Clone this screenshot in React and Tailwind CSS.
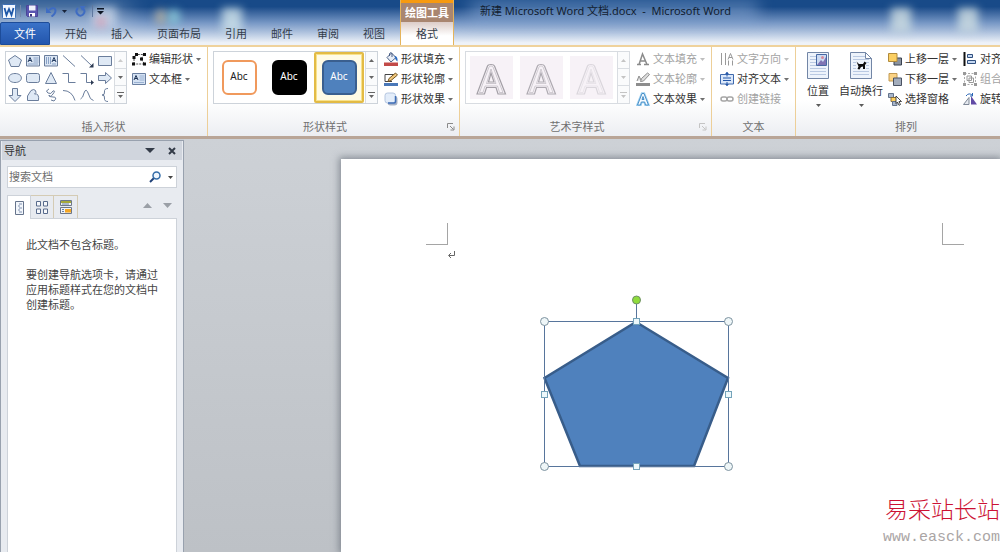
import React, { useState } from "react";

const TABS = ["开始", "插入", "页面布局", "引用", "邮件", "审阅", "视图"];

const LINE = "#6a7d9b";
const FILL = "#dfe9f5";

const SHAPES = [
  { name: "五边形", d: "M7 1.500 13.500 6 11 12.500H3L.5 6Z", fill: true },
  { name: "文本框", box: "left" },
  { name: "竖排文本框", box: "right" },
  { name: "直线", d: "M1 1.500 13 12.500" },
  { name: "箭头", d: "M1 1.500 12 12", head: "M13.500 13.500H9L13.500 9Z" },
  { name: "矩形", d: "M.5 2.500H13.500V11.500H.5Z", fill: true },
  { name: "椭圆", d: "M7 2.500C15.500 2.500 15.500 11.500 7 11.500S-1.500 2.500 7 2.500Z", fill: true },
  { name: "圆角矩形", d: "M2.500 2.500H11.500Q13.500 2.500 13.500 4.500V9.500Q13.500 11.500 11.500 11.500H2.500Q.5 11.500 .5 9.500V4.500Q.5 2.500 2.500 2.500Z", fill: true },
  { name: "三角形", d: "M7 1.500 12.500 12.500H1.500Z", fill: true },
  { name: "肘形连接符", d: "M.5 2.500H6.500V11.500H13.500" },
  { name: "肘形箭头", d: "M.5 2.500H6.500V11.500H12", head: "M11 9 14 11.500 11 14Z" },
  { name: "右箭头", d: "M.5 4.500H7.500V1.500L13.500 7 7.500 12.500V9.500H.5Z", fill: true },
  { name: "下箭头", d: "M4.500 .5H9.500V7.500H13L7 13.500 1 7.500H4.500Z", fill: true },
  { name: "任意多边形", d: "M1.500 12.500V8L5 2.500Q8 .5 9.500 2.500T8.500 6Q13.500 5 12.500 12.500Z", fill: true },
  { name: "自由曲线", d: "M5 1Q1 3 4 5T9 3Q12 2 9 6T5 7Q4 9 9 9T10 13L7 12" },
  { name: "弧形", d: "M1 2.500Q10 2.500 13 12.500" },
  { name: "曲线", d: "M.5 11Q3 10 4 5Q6-1 8.500 6Q10 12 13.500 12.500" },
  { name: "左大括号", d: "M10 .5Q6 .5 6.500 4Q7 7 4 7Q7 7 6.500 10Q6 13.500 10 13.500" },
];

function ShapeIcon({ shape }) {
  if (shape.box) {
    const left = shape.box === "left";
    return (
      <svg width="14" height="14" viewBox="0 0 14 14" fill="none">
        <path d="M.5 1.500h13v10.500H.5z" fill="#dbe6f4" stroke={LINE} />
        <path
          d={left ? "M2 8 4 3.500 6 8M3 6.500h2" : "M8 8 10 3.500 12 8M9 6.500h2"}
          stroke="#22395e"
        />
        <path
          d={left ? "M7.500 4h5M7.500 6h5M7.500 8h5M2 10h10" : "M2.500 3v7M4.500 3v7M6.500 3v7M8 10h4"}
          stroke="#8aa2c6"
        />
      </svg>
    );
  }
  return (
    <svg width="14" height="14" viewBox="0 0 14 14">
      <path d={shape.d} fill={shape.fill ? FILL : "none"} stroke={LINE} />
      {shape.head && <path d={shape.head} fill="#2c3a52" />}
    </svg>
  );
}

function Arrow({ className = "" }) {
  return (
    <svg className={`shrink-0 ${className}`} width="5" height="3" viewBox="0 0 5 3">
      <path d="M0 0h5L2.500 3z" fill="currentColor" />
    </svg>
  );
}

const ICONS = {
  editShape: (
    <>
      <path d="M2 12V5l2-2.500h8L9 7l3.500 5Z" fill="none" stroke="#555" strokeDasharray="2 1" />
      <path d="M0 10.500h3v3H0zM.5 4h3v3h-3zM3 1h3v3H3zM11 1h3v3h-3zM8 5.500h3v3H8zM11 10.500h3v3h-3z" fill="#111" />
    </>
  ),
  textBox: (
    <>
      <path d="M.5 1.500h13v11H.5z" fill="#d5e2f3" stroke="#6a7fa0" />
      <path d="M2 8 4 3.500 6 8M3 6.500h2" fill="none" stroke="#1c3254" />
      <path d="M7.500 4h5M7.500 6h5M7.500 8h5M2 10.500h10" stroke="#9ab1d1" />
    </>
  ),
  fill: (
    <>
      <path d="M3 5.500 7.500 1l4.500 4.500-5 4.500Z" fill="#e8eef7" stroke="#4a5f85" />
      <path d="M5.500 4V1.500q1.500-2 2.500 0V5" fill="none" stroke="#4a5f85" />
      <path d="M10.500 4q3.500 0 3 5.500-2-1-2.500-3.500Z" fill="#2d6cc0" />
      <path d="M0 10.500h14V14H0z" fill="#c24a48" />
    </>
  ),
  outline: (
    <>
      <path d="M1 2.500h10M1 2.500v7h7" fill="none" stroke="#444" />
      <path d="M4 9.500 5 6.500 11.500 1 13.500 3 7 8.500Z" fill="#f0c77c" stroke="#735320" />
      <path d="M0 11h14v3H0z" fill="#4a78b8" />
    </>
  ),
  effect: (
    <>
      <rect x="3.500" y="4" width="10" height="9.500" rx="3" fill="#a5b1c6" />
      <rect x="1" y="1" width="10.500" height="10" rx="2.500" fill="#e3edfa" stroke="#b5c6e0" />
      <path d="M11.500 4v5.500q0 1.500-1.500 1.500H4" fill="none" stroke="#3f6fb8" strokeWidth="1.500" />
    </>
  ),
  textFill: (
    <path d="M1 12.500h4M8 12.500h5M3 12.500 6.500 2 11 12.500M4.500 9h5" fill="none" stroke="#8b8b8b" strokeWidth="1.500" />
  ),
  textOutline: (
    <>
      <path d="M1 9 3 4l2 4M4.500 9.500l1-3L11.500 1l2 1.500-6 6.500Z" fill="#ddd" stroke="#8d8d8d" />
      <path d="M0 11h14v3H0z" fill="#8d8d8d" />
    </>
  ),
  textEffect: (
    <>
      <path d="M1.500 13 6 1.500h2L12.500 13H9.500L8.700 10H5.300L4.500 13ZM6 7.500h2l-1-3Z" fill="#eaf6ff" stroke="#9fd2f2" strokeWidth="2.500" />
      <path d="M1.500 13 6 1.500h2L12.500 13H9.500L8.700 10H5.300L4.500 13ZM6 7.500h2l-1-3Z" fill="#f4faff" stroke="#4a90c8" />
    </>
  ),
  direction: (
    <>
      <path d="M1.500 1v12M5.500 1v12" stroke="#999" />
      <path d="M8 7.500 10.500 1.500 13 7.500M9 5.500h3M8.500 8.500v5M12.500 8.500v5" fill="none" stroke="#999" />
    </>
  ),
  alignText: (
    <>
      <path d="M.5 2.500h13v9.500H.5z" fill="#dbe8fa" stroke="#3f69ad" />
      <path d="M3 6h8M3 8.500h8M7 0v4.500M7 14V10" stroke="#2356a8" />
      <path d="M5 2 7 0l2 2M5 12l2 2 2-2" fill="#2356a8" />
    </>
  ),
  link: (
    <>
      <rect x="1" y="5" width="6" height="4" rx="2" fill="none" stroke="#a5a5a5" strokeWidth="1.500" />
      <rect x="7" y="5" width="6" height="4" rx="2" fill="none" stroke="#a5a5a5" strokeWidth="1.500" />
    </>
  ),
  forward: (
    <>
      <path d="M6 6h7.500v7H6z" fill="#8a93a0" stroke="#39414f" />
      <path d="M.5 1.500h8.500v8H.5z" fill="#fbcf62" stroke="#b08a3c" />
    </>
  ),
  backward: (
    <>
      <path d="M1 1.500h8v7.500H1z" fill="#fbd384" stroke="#c29a52" />
      <path d="M5.500 6h8v7.500h-8z" fill="#a3adbc" stroke="#4a5262" />
    </>
  ),
  selectPane: (
    <>
      <path d="M.5 1.500h5v4h-5z" fill="#a9b6ca" stroke="#64748c" />
      <path d="M3 5.500h5.500v4H3z" fill="#ffd15c" stroke="#8c713a" />
      <path d="M4.500 9.500H9v4H4.500z" fill="#a9b6ca" stroke="#64748c" />
      <path d="m8 4 5.500 5.500h-2.500l1.500 3-1.500.800L9.500 10 8 11.500Z" fill="#fff" stroke="#222" strokeWidth=".8" />
    </>
  ),
  align: (
    <>
      <path d="M1.500 0v14" stroke="#111" strokeWidth="2" />
      <path d="M4.500 2.500h5v3h-5zM4.500 8.500h8v3h-8z" fill="#c5d8f2" stroke="#2f4f7e" />
    </>
  ),
  group: (
    <>
      <path d="M1.500 1.500h11v11h-11z" fill="none" stroke="#aaa" strokeDasharray="2 1.500" />
      <path d="M4 4h4.500v4.500H4zM6 6h4.500v4.500H6z" fill="none" stroke="#999" />
      <path d="M0 0h3v3H0zM11 0h3v3h-3zM0 11h3v3H0zM11 11h3v3h-3z" fill="#999" />
    </>
  ),
  rotate: (
    <>
      <path d="M.5 12.500H6V5.500Z" fill="#e5e9ef" stroke="#7d8796" />
      <path d="M8 12.500h6L8 4Z" fill="#614aa5" />
      <path d="M3 4q3-4 6.500-.5M9.500 1v3H7" fill="none" stroke="#2864b4" />
    </>
  ),
};

function Command({ icon, label, arrow = true, disabled = false }) {
  return (
    <button
      type="button"
      disabled={disabled}
      className={`flex h-5 items-center gap-[3px] whitespace-nowrap ${
        disabled ? "text-[#a3a3a3]" : "text-[#333]"
      }`}
    >
      <svg className="shrink-0" width="14" height="14" viewBox="0 0 14 14">
        {ICONS[icon]}
      </svg>
      <span>{label}</span>
      {arrow && <Arrow className="opacity-70" />}
    </button>
  );
}

function Group({ title, launcher, dim, className = "", children }) {
  return (
    <section
      aria-label={title}
      className="flex shrink-0 flex-col justify-between border-r border-[#edcf98] pt-[2px]"
    >
      <div className={`flex items-start pr-[6px] ${className}`}>{children}</div>
      <div className="flex h-[18px] items-center text-[#707070]">
        <h3 className="flex-1 text-center">{title}</h3>
        {launcher && (
          <button type="button" aria-label={`${title}对话框`} className={`mr-[4px] ml-[5px] ${dim ? "text-[#c4c4c4]" : "text-[#8a8a8a]"}`}>
            <svg width="8" height="8" viewBox="0 0 8 8" fill="none" stroke="currentColor">
              <path d="M.5 5V.5H6M3 3l3.500 3.500M7 3.500V7H3.500" />
            </svg>
          </button>
        )}
      </div>
    </section>
  );
}

function GalleryScroll({ dimUp, dim }) {
  const tone = dim ? "text-[#c4c4c4]" : "text-[#666]";
  return (
    <div className="grid w-3 grid-rows-3 divide-y divide-[#d9dde2] border-l border-[#d9dde2] bg-[#fafbfc]">
      <button type="button" aria-label="上一行" className={`grid place-items-center ${dimUp ? "text-[#ccc]" : tone}`}>
        <Arrow className="rotate-180" />
      </button>
      <button type="button" aria-label="下一行" className={`grid place-items-center ${tone}`}>
        <Arrow />
      </button>
      <button type="button" aria-label="其他" className={`grid place-items-center ${tone}`}>
        <svg width="7" height="6" viewBox="0 0 7 6">
          <path d="M0 0h7v1H0zM1 3h5L3.500 6z" fill="currentColor" />
        </svg>
      </button>
    </div>
  );
}

const STYLES = [
  "border-2 border-[#f0995c] bg-white text-[#222]",
  "border-2 border-black bg-black text-white",
  "border-2 border-[#3a5f8f] bg-[#4f81bd] text-white",
];

const WORD_ART = ["#a39fa6", "#aeaab1", "#dad6dc"];

function WordArt({ color }) {
  return (
    <svg width="43" height="43" viewBox="0 0 43 43" fill="none" stroke={color}>
      <path
        d="M7 38 17.500 10Q18 8.500 21 8.500T24.500 10L35.500 38H28L26 31.500H16.500L14.500 38ZM18.500 26H24L21 17Z"
        strokeWidth="1.200"
      />
      <path
        d="M9.500 36.500 19 11Q19.500 10 21 10T23 11L33 36.500H29.500L27.500 30H15L13 36.500ZM16.500 27.500H26L21 13Z"
        strokeWidth=".5"
      />
    </svg>
  );
}

function PageIcon({ wrap }) {
  return (
    <svg width="22" height="27" viewBox="0 0 22 27">
      <path d={wrap ? "M.5.5H15.500L21.500 6.500V26.500H.5Z" : "M.5.5H21.500V26.500H.5Z"} fill="#edf3fb" stroke="#7286a6" />
      <path d="M3 4.500h16M3 7.500h16M3 10.500h16M3 13.500h16M3 16.500h16M3 19.500h16M3 22.500h16" stroke="#b9c9e2" />
      {wrap ? (
        <>
          <path d="M15.500.5V6.500H21.500Z" fill="#fff" stroke="#7286a6" />
          <path d="M6 8h10v11H6z" fill="#edf3fb" />
          <path d="M6.500 9.500 9 12h4l1.500-2.500 2 1.500-1.500 2v4h-2v-2.500l-2 .5-1.500 2.500-2-.5 1-2.500Z" fill="#0c0c0c" />
        </>
      ) : (
        <>
          <path d="M9.500 2.500h10v11h-10z" fill="#cbdaf2" stroke="#4667a2" />
          <path d="m10 13 4-5 2 2 3-5v8Z" fill="#7f74b4" />
          <circle cx="15.500" cy="5.500" r="1.500" fill="#d78a9a" />
        </>
      )}
    </svg>
  );
}

function BigCommand({ wrap, label }) {
  return (
    <button type="button" className="flex flex-col items-center px-[2px] pt-[3px] text-[#333]">
      <PageIcon wrap={wrap} />
      <span className="mt-[3px] h-[18px] leading-[18px] whitespace-nowrap">{label}</span>
      <Arrow className="mt-[4px] opacity-80" />
    </button>
  );
}

function Header() {
  return (
    <header className="relative flex overflow-hidden border-b-2 border-[#efd29c] bg-linear-to-b from-[#184a88] from-15% via-[#7596c4] via-50% to-[#eef2f8] to-95%">
      {/* desktop icons showing through the glass frame */}
      <div aria-hidden="true" className="pointer-events-none absolute inset-0">
        <div className="absolute top-[6px] -left-4 h-5 w-36 bg-white/45 blur-md" />
        <div className="absolute top-[7px] left-[92px] h-[20px] w-6 bg-[#cfdcec]/70 blur-xs" />
        <div className="absolute top-[18px] left-[97px] h-2 w-2 bg-[#e58aa0]/80 blur-xs" />
        <div className="absolute top-[9px] left-[155px] h-4 w-3 rounded-full bg-[#b9b4a2]/80 blur-xs" />
        <div className="absolute top-[9px] left-[168px] h-4 w-3 rounded-full bg-[#8fd0dc]/80 blur-xs" />
        <div className="absolute top-[8px] left-[222px] h-6 w-5 bg-[#cfe3ea]/80 blur-xs" />
        <div className="absolute top-[8px] left-[891px] h-6 w-5 bg-[#cfdfe2]/80 blur-xs" />
        <div className="absolute top-[8px] left-[958px] h-6 w-5 bg-[#cfdfe2]/80 blur-xs" />
        <div className="absolute top-[2px] left-[470px] h-4 w-72 bg-[#a9c4e8]/45 blur-sm" />
      </div>

      <div className="relative shrink-0">
        <div className="flex h-[22px] items-center pl-[2px]">
          <svg width="14" height="15" viewBox="0 0 14 15">
            <rect x=".5" y=".5" width="13" height="14" rx="1" fill="#f2f7ff" stroke="#3c6fb5" />
            <path d="M2.500 4 4.500 11 7 5 9.500 11 11.500 4" fill="none" stroke="#1d57a8" strokeWidth="1.800" />
          </svg>
          <span className="mr-[5px] ml-[4px] h-3 w-px bg-[#7389ac]" />
          <button type="button" aria-label="保存">
            <svg width="12" height="12" viewBox="0 0 12 12">
              <path d="M.5.5h11v11H1.500l-1-1Z" fill="#5a55b0" stroke="#4a4698" />
              <path d="M3 .5h6.500v5H3z" fill="#eef1fb" />
              <path d="M3 8h6v3.500H3z" fill="#fff" />
              <path d="M4 9h2v2.500H4z" fill="#38347f" />
            </svg>
          </button>
          <button type="button" aria-label="撤消" className="ml-2 flex items-center gap-[5px] text-[#18233a]">
            <svg width="11" height="11" viewBox="0 0 11 11">
              <path d="M3 4Q9 0 9.500 4.500 9.500 8 5.500 10.500" fill="none" stroke="#3f6cc2" strokeWidth="2" />
              <path d="M0 1v6h5.500Z" fill="#3f6cc2" />
            </svg>
            <Arrow />
          </button>
          <button type="button" aria-label="重复" className="ml-[8px]">
            <svg width="11" height="11" viewBox="0 0 11 11">
              <path d="M3 2Q0 5 2.500 8T8 8.500Q11 5.500 8 2.500" fill="none" stroke="#3f6cc2" strokeWidth="2" />
              <path d="M5 0h5.500L7 5Z" fill="#3f6cc2" />
            </svg>
          </button>
          <span className="mr-[4px] ml-[6px] h-3 w-px bg-[#5f789f]" />
          <button type="button" aria-label="自定义快速访问工具栏" className="text-[#0d1524]">
            <svg width="7" height="7" viewBox="0 0 7 7">
              <path d="M0 0h7v1.500H0zM0 3h7L3.500 6.500z" fill="currentColor" />
            </svg>
          </button>
        </div>
        <nav className="flex h-[23px]">
          <button
            type="button"
            className="mr-[3px] w-[50px] rounded-t-xs border border-[#1d4c99] bg-linear-to-b from-[#3a72c8] to-[#2356ad] text-white"
          >
            文件
          </button>
          {TABS.map((tab) => (
            <button key={tab} type="button" className="px-3 text-[#333c4a]">
              {tab}
            </button>
          ))}
        </nav>
      </div>

      <div className="relative ml-[3px] flex w-[54px] shrink-0 flex-col border-x border-[#e5b45c]">
        <div className="flex h-[22px] items-center justify-center border-t-[3px] border-[#f79a10] bg-[#a98670] font-bold text-white">
          绘图工具
        </div>
        <button
          type="button"
          className="flex-1 bg-linear-to-b from-[#dccdc8] to-white to-60% text-[#333c4a]"
        >
          格式
        </button>
      </div>

      <h1 className="relative flex h-[21px] min-w-0 flex-1 items-center truncate pl-[26px] text-[#121d30]">
        新建 Microsoft Word 文档.docx&nbsp; -&nbsp; Microsoft Word
      </h1>
    </header>
  );
}

function Ribbon() {
  const [style, setStyle] = useState(2);

  return (
    <div className="flex h-[92px] overflow-hidden border-b-[3px] border-[#b9a597] bg-linear-to-b from-white from-60% to-[#eceef2]">
      <Group title="插入形状" className="pl-[5px]">
        <div className="mt-[2px] mr-[5px] flex h-[53px] border border-[#cdd3da]">
          <div className="grid grid-cols-6">
            {SHAPES.map((shape) => (
              <button key={shape.name} type="button" aria-label={shape.name} className="grid w-[18px] place-items-center">
                <ShapeIcon shape={shape} />
              </button>
            ))}
          </div>
          <GalleryScroll dimUp />
        </div>
        <div>
          <Command icon="editShape" label="编辑形状" />
          <Command icon="textBox" label="文本框" />
        </div>
      </Group>

      <Group title="形状样式" launcher className="pl-[5px]">
        <div className="mt-[2px] mr-[6px] flex h-[53px] border border-[#cdd3da] bg-white">
          <div className="flex w-[151px]">
            {STYLES.map((tone, i) => (
              <button
                key={tone}
                type="button"
                onClick={() => setStyle(i)}
                className={`grid w-[50px] place-items-center rounded-xs ${
                  style === i ? "border-2 border-[#e3bb45] bg-[#fffbe6] ring-1 ring-[#f8e28c] ring-inset" : ""
                }`}
              >
                <span className={`grid size-[35px] place-items-center rounded-md pb-1 text-[10px] ${tone}`}>Abc</span>
              </button>
            ))}
          </div>
          <GalleryScroll />
        </div>
        <div>
          <Command icon="fill" label="形状填充" />
          <Command icon="outline" label="形状轮廓" />
          <Command icon="effect" label="形状效果" />
        </div>
      </Group>

      <Group title="艺术字样式" launcher dim className="pl-[5px]">
        <div className="mt-[2px] mr-[6px] flex h-[53px] border border-[#d8dce1] bg-white">
          <div className="flex w-[151px] items-center gap-[7px] pl-[4px]">
            {WORD_ART.map((color, i) => (
              <button key={color} type="button" disabled aria-label={`艺术字 ${i + 1}`} className="bg-[#f7f2f7]">
                <WordArt color={color} />
              </button>
            ))}
          </div>
          <GalleryScroll dim />
        </div>
        <div>
          <Command icon="textFill" label="文本填充" disabled />
          <Command icon="textOutline" label="文本轮廓" disabled />
          <Command icon="textEffect" label="文本效果" />
        </div>
      </Group>

      <Group title="文本" className="pl-[8px]">
        <div>
          <Command icon="direction" label="文字方向" disabled />
          <Command icon="alignText" label="对齐文本" />
          <Command icon="link" label="创建链接" arrow={false} disabled />
        </div>
      </Group>

      <Group title="排列" className="pl-[9px]">
        <BigCommand label="位置" />
        <div className="mr-[3px] ml-[6px]">
          <BigCommand wrap label="自动换行" />
        </div>
        <div className="mr-[6px]">
          <Command icon="forward" label="上移一层" />
          <Command icon="backward" label="下移一层" />
          <Command icon="selectPane" label="选择窗格" arrow={false} />
        </div>
        <div>
          <Command icon="align" label="对齐" />
          <Command icon="group" label="组合" disabled />
          <Command icon="rotate" label="旋转" />
        </div>
      </Group>
    </div>
  );
}

function Navigation() {
  const [query, setQuery] = useState("");

  return (
    <aside className="mt-px flex w-[184px] shrink-0 flex-col border-t border-r border-l border-[#98a1ae] bg-[#e8ebf0]">
      <div className="mx-px flex h-[19px] items-center bg-[#d0d5dd] pr-[6px] pl-[2px] text-[#333]">
        <h2 className="flex-1">导航</h2>
        <button type="button" aria-label="任务窗格选项">
          <svg width="10" height="5" viewBox="0 0 10 5">
            <path d="M0 0h10L5 5z" fill="#333b48" />
          </svg>
        </button>
        <button type="button" aria-label="关闭" className="ml-[13px]">
          <svg width="8" height="8" viewBox="0 0 8 8">
            <path d="m1 1 6 6M7 1 1 7" stroke="#333b48" strokeWidth="2" />
          </svg>
        </button>
      </div>

      <form
        className="mx-[6px] mt-[6px] flex h-[22px] items-center border border-[#cdd2d9] bg-white pr-[3px]"
        onSubmit={(e) => e.preventDefault()}
      >
        <input
          type="text"
          aria-label="搜索文档"
          placeholder="搜索文档"
          value={query}
          onChange={(e) => setQuery(e.target.value)}
          className="min-w-0 flex-1 pl-[1px] placeholder:text-[#6d6d6d] focus:outline-none"
        />
        <button type="submit" aria-label="搜索">
          <svg width="12" height="12" viewBox="0 0 12 12" fill="none">
            <path d="M1 11 5 7" stroke="#1f4078" strokeWidth="2" />
            <circle cx="7.500" cy="4.500" r="3.500" fill="#eef5fc" stroke="#336ca8" strokeWidth="1.500" />
          </svg>
        </button>
        <button type="button" aria-label="搜索选项" className="ml-[7px] text-[#444]">
          <Arrow />
        </button>
      </form>

      <div className="mx-[6px] mt-[7px] flex items-center">
        <button
          type="button"
          aria-label="浏览标题"
          className="z-10 -mb-px grid h-6 w-6 place-items-center border border-b-0 border-[#cdd2d9] bg-white"
        >
          <svg width="9" height="14" viewBox="0 0 9 14" fill="none">
            <path d="M.5.5h8v13h-8z" fill="#f2f6fb" stroke="#66748c" />
            <path d="M4 3h3M3 5h2M4 7h3M3 9h2M4 11h3" stroke="#7e8fae" />
          </svg>
        </button>
        <button type="button" aria-label="浏览页面" className="grid h-[23px] w-[23px] place-items-center border-t border-r border-[#d4cbb4]">
          <svg width="12" height="13" viewBox="0 0 12 13" fill="none" stroke="#586b8c">
            <path d="M.5.5h4v4.500h-4zM7.500.5h4v4.500h-4zM.5 8h4v4.500h-4zM7.500 8h4v4.500h-4z" fill="#f7f9fc" />
          </svg>
        </button>
        <button type="button" aria-label="浏览搜索结果" className="grid h-[23px] w-[24px] place-items-center border-t border-r border-[#d4cbb4]">
          <svg width="12" height="14" viewBox="0 0 12 14" fill="none">
            <path d="M.5.500h11v5H.5zM.5 7.500h11v6H.5z" fill="#eef2f7" stroke="#6d7788" />
            <path d="M1 1h10v2H1z" fill="#a6a93a" />
            <path d="M5 9h6v3.500H5z" fill="#f5a623" />
            <path d="M2 4h7M2 9.500h2M2 11.500h2" stroke="#6a7fa6" />
          </svg>
        </button>
        <div className="mb-[3px] ml-auto flex gap-[11px] pr-[5px] text-[#9a9fa6]">
          <button type="button" aria-label="上一标题">
            <svg width="9" height="5" viewBox="0 0 9 5">
              <path d="M0 5h9L4.500 0z" fill="currentColor" />
            </svg>
          </button>
          <button type="button" aria-label="下一标题">
            <svg width="9" height="5" viewBox="0 0 9 5">
              <path d="M0 0h9L4.500 5z" fill="currentColor" />
            </svg>
          </button>
        </div>
      </div>

      <div className="mx-[6px] flex-1 border-x border-t border-[#cdd2d9] bg-white px-[18px] pt-[18px] leading-[15px] text-[#444]">
        <p>此文档不包含标题。</p>
        <p className="mt-[15px]">要创建导航选项卡，请通过应用标题样式在您的文档中创建标题。</p>
      </div>
    </aside>
  );
}

const CORNERS = [
  [10, 32],
  [194, 32],
  [10, 177],
  [194, 177],
];

const EDGES = [
  [102, 32],
  [10, 105],
  [194, 105],
  [102, 177],
];

function Pentagon() {
  return (
    <svg width="204" height="188" viewBox="0 0 204 188">
      <path d="M102 33 194 89 160 177H46L10.500 89Z" fill="#4f81bd" stroke="#385d8a" strokeWidth="2.500" />
      <path d="M10.500 32.500H194.500V177.500H10.500ZM102.500 12V32" fill="none" stroke="#57759c" />
      <circle cx="102.500" cy="11" r="4" fill="#8fdc3c" stroke="#6f8f68" />
      {CORNERS.map(([x, y]) => (
        <circle key={`${x}-${y}`} cx={x + 0.5} cy={y + 0.5} r="4" fill="#eef6f8" stroke="#7d929f" />
      ))}
      {EDGES.map(([x, y]) => (
        <rect key={`${x}-${y}`} x={x - 2.5} y={y - 2.5} width="6" height="6" fill="#edf8fb" stroke="#74a3ba" />
      ))}
    </svg>
  );
}

function Document() {
  return (
    <main className="flex min-w-0 flex-1 bg-linear-to-b from-[#cdd1d6] to-[#bdc1c6] pt-[20px] pl-[157px]">
      <article className="relative flex-1 bg-white shadow-[0_0_7px_2px_rgba(90,98,110,0.6)]">
        <div className="flex justify-between pt-[64px] pr-[36px] pl-[85px]">
          <span className="size-[22px] border-r border-b border-[#a5a5a5]" />
          <span className="size-[22px] border-b border-l border-[#a5a5a5]" />
        </div>
        <svg className="mt-[6px] ml-[107px]" width="7" height="8" viewBox="0 0 7 8" fill="none" stroke="#666">
          <path d="M6.500 0V4.500H1M3 2 .5 4.500 3 7" />
        </svg>
        <div className="absolute top-[130px] left-[193px]">
          <Pentagon />
        </div>
      </article>
    </main>
  );
}

export default function App() {
  return (
    <div className="relative flex min-h-screen flex-col overflow-hidden bg-[#c9cdd3] font-['Noto_Sans','Noto_Sans_CJK_SC',sans-serif] text-[11px] leading-4">
      <Header />
      <Ribbon />
      <div className="flex flex-1">
        <Navigation />
        <Document />
      </div>
      <div className="absolute right-0 bottom-[4px] text-right">
        <p className="font-['Noto_Sans_CJK_SC',sans-serif] text-[23px] leading-6 font-light text-[#cc1234]">易采站长站</p>
        <p className="mt-[8px] font-['Liberation_Mono',monospace] text-[15px] leading-5 text-[#aaa5a5]">www.easck.com</p>
      </div>
    </div>
  );
}
